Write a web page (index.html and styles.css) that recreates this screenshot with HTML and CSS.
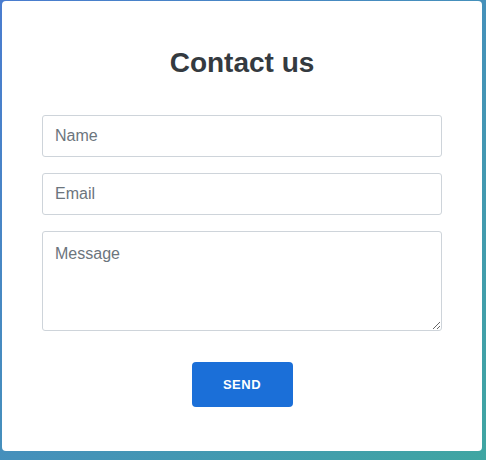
FILE: index.html
```html
<!DOCTYPE html>
<html lang="en">
<head>
    <meta charset="UTF-8">
    <meta name="viewport" content="width=device-width, initial-scale=1.0">
    <title>Contact us</title>
    <link rel="stylesheet" href="styles.css">
</head>
<body>
    <div class="page">
        <form class="contact-card">
            <h2>Contact us</h2>
            <input class="field" type="text" placeholder="Name">
            <input class="field" type="email" placeholder="Email">
            <textarea class="field message" placeholder="Message"></textarea>
            <button class="send-btn" type="button">Send</button>
        </form>
    </div>
</body>
</html>
```

FILE: styles.css
```css
html, body {
    margin: 0;
    height: 100%;
}
body {
    font-family: "Liberation Sans", Arial, sans-serif;
    background: linear-gradient(135deg, #4a7ccf 0%, #4590bb 50%, #3fa6a2 100%);
}
.page {
    padding: 1px 4px 9px 2px;
}
.contact-card {
    display: flex;
    flex-direction: column;
    gap: 16px;
    width: 480px;
    box-sizing: border-box;
    padding: 32px 40px 44px;
    background-color: #ffffff;
    border-radius: 4px;
}
.contact-card h2 {
    margin: 14px 0 20px;
    text-align: center;
    font-size: 28px;
    font-weight: bold;
    color: #343a40;
}
.field {
    box-sizing: border-box;
    width: 100%;
    height: 42px;
    padding: 0 12px;
    border: 1px solid #ced4da;
    border-radius: 3px;
    font-family: inherit;
    font-size: 16px;
    color: #343a40;
}
.field::placeholder {
    color: #6c757d;
}
.message {
    height: 100px;
    padding-top: 13px;
    resize: vertical;
}
.send-btn {
    align-self: center;
    margin-top: 15px;
    width: 101px;
    height: 45px;
    border: none;
    border-radius: 4px;
    background-color: #1b6fd8;
    color: #ffffff;
    font-family: inherit;
    font-size: 13px;
    font-weight: bold;
    letter-spacing: 0.5px;
    text-transform: uppercase;
}
```
